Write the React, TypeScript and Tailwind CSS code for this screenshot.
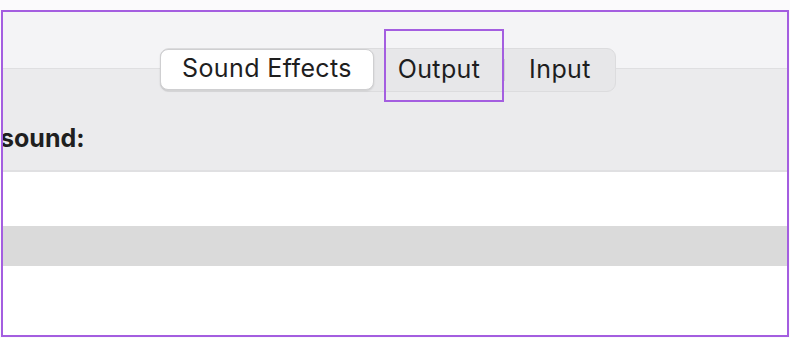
const font = { fontFamily: "Inter, 'Liberation Sans', sans-serif" };

export default function App() {
  return (
    <div className="w-[790px] h-[338px] bg-[#fbfafc] pt-[10px] pl-[1px]" style={font}>
      <div className="w-[788px] h-[327px] border-2 border-[#a45ee0] bg-white flex flex-col overflow-hidden">
        {/* toolbar with segmented control */}
        <div className="h-[57px] shrink-0 bg-[#f4f4f6] border-b border-[#dfdfe1] pt-[36px] pl-[157px]">
          <div className="relative z-10 flex w-[456px] h-[44px] rounded-[9px] bg-[#e7e7e9] border border-[#dcdcde] text-[25px] text-[#1e1e1e] leading-none">
            <div className="w-[214px] h-[41px] -ml-[1px] rounded-[8px] bg-white border border-[#cfcfd1] shadow-[0_1px_2px_rgba(0,0,0,0.12)] flex items-center justify-center pb-[2px] tracking-[0.4px]">
              Sound Effects
            </div>
            <div className="relative w-[130px] flex items-center justify-center pb-[2px] tracking-[0.4px]">
              Output
              <div className="absolute left-[10px] -top-[20px] w-[120px] h-[73px] border-2 border-[#a45ee0]" />
            </div>
            <div className="w-px h-[22px] self-center bg-[#cfcfd1]" />
            <div className="flex-1 flex items-center justify-center pb-[2px] tracking-[0.4px]">
              Input
            </div>
          </div>
        </div>

        {/* heading row */}
        <div className="h-[103px] shrink-0 bg-[#ebebed] border-b-2 border-[#e0e0e2] pt-[54px] -ml-[3px]">
          <span className="text-[25px] leading-[30px] font-bold text-[#1f1f1f]">sound:</span>
        </div>

        <div className="h-[54px] shrink-0 bg-white" />
        <div className="h-[40px] shrink-0 bg-[#dadada]" />
        <div className="flex-1 bg-white" />
      </div>
    </div>
  );
}
